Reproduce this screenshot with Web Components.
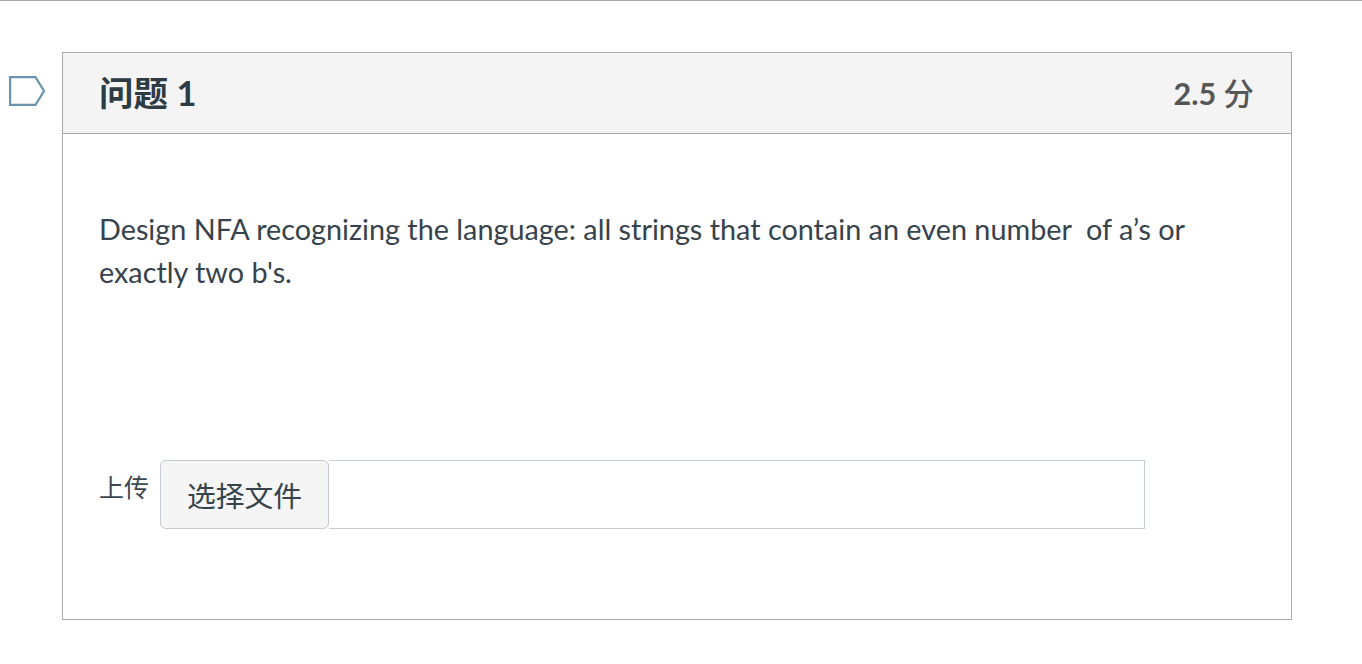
<!DOCTYPE html>
<html lang="zh">
<head>
<meta charset="utf-8">
<title>问题 1</title>
<style>
  html, body { margin: 0; background: #fff; }
  body { font-family: Lato, "Noto Sans CJK SC", sans-serif; color: #2d3b45; }
</style>
</head>
<body>
<template id="quiz-page-tpl">
  <style>
    :host { display: block; height: 664px; box-sizing: border-box; border-top: 1px solid #a9a9a9; padding: 51px 0 0 9px; }
    .row { display: flex; align-items: flex-start; gap: 17px; }
    svg { flex: none; margin-top: 24px; }
  </style>
  <div class="row">
    <svg width="36" height="30" viewBox="0 0 36 30" fill="none">
      <path d="M1.1 1.2H26.5L35 15L26.5 28.8H1.1Z" stroke="#6a93ad" stroke-width="2.2"/>
    </svg>
    <slot></slot>
  </div>
</template>

<template id="quiz-question-tpl">
  <style>
    :host { display: block; width: 1230px; height: 568px; box-sizing: border-box; border: 1px solid #aaa; background: #fff; }
    header { display: flex; justify-content: space-between; align-items: center; height: 81px; box-sizing: border-box; padding: 0 37px 2px 36px; background: #f4f4f4; border-bottom: 1px solid #aaa; }
    h2 { margin: 0; padding-bottom: 2px; font-size: 34.5px; font-weight: 700; color: #2d3b45; }
    .points { font-size: 30.5px; font-weight: 700; color: #565656; }
    .body { padding: 74px 36px 0; }
  </style>
  <header>
    <h2><slot name="title"></slot></h2>
    <span class="points"><slot name="points"></slot></span>
  </header>
  <div class="body"><slot></slot></div>
</template>

<template id="file-upload-tpl">
  <style>
    :host { display: flex; align-items: flex-start; margin-top: 166px; }
    .label { font-size: 25px; line-height: 54px; height: 54px; width: 61px; flex: none; color: #3b4851; }
    .field { display: flex; width: 985px; height: 69px; }
    button { flex: none; width: 169px; height: 69px; box-sizing: border-box; border: 1px solid #c4cacf; border-radius: 6px; background: #f5f5f5; color: #36434c; font: 28.8px "Noto Sans CJK SC", sans-serif; padding: 0; }
    .name { flex: 1; box-sizing: border-box; border: 1px solid #c7cdd1; border-left: 0; }
  </style>
  <span class="label"><slot name="label"></slot></span>
  <div class="field"><button type="button"><slot name="button"></slot></button><div class="name"></div></div>
</template>

<quiz-page>
  <quiz-question>
    <span slot="title">问题 1</span>
    <span slot="points">2.5 <span style="font-weight:500">分</span></span>
    <p style="margin:0;font-size:28.8px;line-height:43px;color:#36434c">Design NFA recognizing the language: all strings that contain an even number&nbsp; of a’s or exactly two b's.</p>
    <file-upload>
      <span slot="label">上传</span>
      <span slot="button">选择文件</span>
    </file-upload>
  </quiz-question>
</quiz-page>

<script>
  // every element just stamps its template into an open shadow root
  class TemplateElement extends HTMLElement {
    constructor() {
      super();
      const tpl = document.getElementById(this.constructor.templateId);
      this.attachShadow({ mode: 'open' }).appendChild(tpl.content.cloneNode(true));
    }
  }
  class QuizPage extends TemplateElement { static templateId = 'quiz-page-tpl'; }
  class QuizQuestion extends TemplateElement { static templateId = 'quiz-question-tpl'; }
  class FileUpload extends TemplateElement { static templateId = 'file-upload-tpl'; }
  customElements.define('quiz-page', QuizPage);
  customElements.define('quiz-question', QuizQuestion);
  customElements.define('file-upload', FileUpload);
</script>
</body>
</html>
